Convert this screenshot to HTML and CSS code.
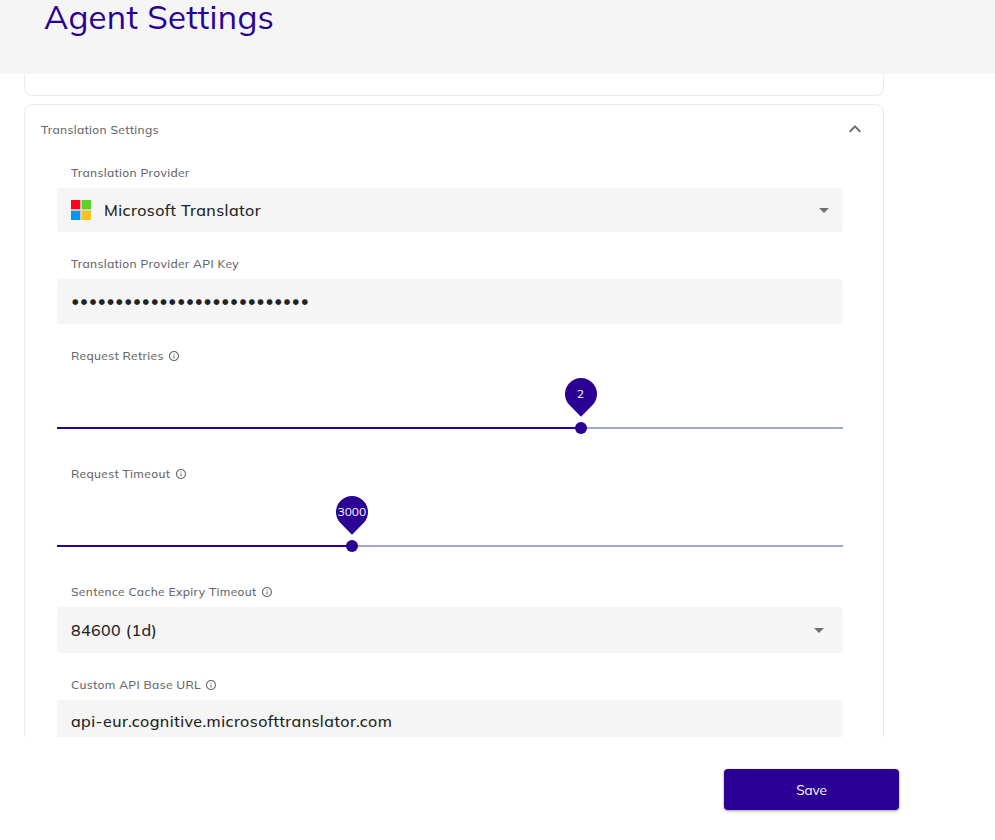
FILE: index.html
```
<!DOCTYPE html>
<html lang="en">
<head>
<meta charset="utf-8">
<title>Agent Settings</title>
<link rel="stylesheet" href="styles.css">
</head>
<body>
<svg class="defs" aria-hidden="true">
  <symbol id="info" viewBox="0 0 24 24"><path d="M11 7h2v2h-2zm0 4h2v6h-2zm1-9C6.48 2 2 6.48 2 12s4.48 10 10 10 10-4.48 10-10S17.52 2 12 2zm0 18c-4.41 0-8-3.59-8-8s3.59-8 8-8 8 3.59 8 8-3.59 8-8 8z"/></symbol>
  <symbol id="arrow" viewBox="0 0 10 5"><path d="M0 0l5 5 5-5z"/></symbol>
</svg>
<header class="page-header"><h1 class="title">Agent Settings</h1></header>
<main class="content">
  <section class="card card-previous"></section>
  <section class="card">
    <div class="card-head">
      <h2 class="label">Translation Settings</h2>
      <svg class="chevron" viewBox="0 0 24 24"><path d="M12 8l-6 6 1.41 1.41L12 10.83l4.59 4.58L18 14z"/></svg>
    </div>
    <div class="group provider">
      <div class="label">Translation Provider</div>
      <div class="field">
        <svg class="logo" viewBox="0 0 20 20"><path class="logo-gap" d="M0 9h20v2H0zM9 0h2v20H9z"/><path class="red" d="M0 0h9.2v9.2H0z"/><path class="green" d="M10.8 0H20v9.2h-9.2z"/><path class="blue" d="M0 10.8h9.2V20H0z"/><path class="yellow" d="M10.8 10.8H20V20h-9.2z"/></svg>
        <span class="value">Microsoft Translator</span>
        <svg class="arrow"><use href="#arrow"/></svg>
      </div>
    </div>
    <div class="group key">
      <div class="label">Translation Provider API Key</div>
      <div class="field"><span class="password">●●●●●●●●●●●●●●●●●●●●●●●●●●●</span></div>
    </div>
    <div class="group slider-group retries">
      <div class="label">Request Retries<svg class="info"><use href="#info"/></svg></div>
      <div class="slider"><div class="fill"></div><div class="thumb"><div class="pin"><span>2</span></div></div></div>
    </div>
    <div class="group slider-group timeout">
      <div class="label">Request Timeout<svg class="info"><use href="#info"/></svg></div>
      <div class="slider"><div class="fill"></div><div class="thumb"><div class="pin"><span>3000</span></div></div></div>
    </div>
    <div class="group cache">
      <div class="label">Sentence Cache Expiry Timeout<svg class="info"><use href="#info"/></svg></div>
      <div class="field"><span class="value">84600 (1d)</span><svg class="arrow"><use href="#arrow"/></svg></div>
    </div>
    <div class="group url">
      <div class="label">Custom API Base URL<svg class="info"><use href="#info"/></svg></div>
      <div class="field"><span class="value">api-eur.cognitive.microsofttranslator.com</span></div>
    </div>
  </section>
</main>
<footer class="actions"><button class="save">Save</button></footer>
</body>
</html>
```
FILE: styles.css
```
* { box-sizing: border-box; }
body { margin: 0; height: 840px; display: flex; flex-direction: column; overflow: hidden; background: #fff; font-family: Mulish, Muli, Lato, sans-serif; color: #222; }
.defs { display: none; }
.page-header { flex: none; height: 74px; padding-left: 44px; background: #f5f5f5; }
.title { margin: 0; font-size: 33px; line-height: 34px; font-weight: 400; letter-spacing: .3px; color: #2b0094; white-space: nowrap; }
.content { flex: none; height: 663px; padding-left: 24px; overflow: hidden; display: flex; flex-direction: column; gap: 8px; }
.card { flex: none; width: 860px; height: 700px; padding: 0 40px 0 32px; border: 1px solid #ebebeb; border-radius: 8px; }
.card-previous { height: 22px; border-top: 0; border-radius: 0 0 8px 8px; }
.card-head { height: 59px; margin: 0 -24px 0 -16px; padding: 16px 0 0; display: flex; justify-content: space-between; align-items: flex-start; }
.label { display: flex; align-items: center; height: 18px; margin: 0; font-size: 12px; line-height: 18px; font-weight: 500; letter-spacing: .33px; color: #67676b; white-space: nowrap; }
.chevron { width: 24px; height: 24px; margin: -4px 0 0 0; fill: #6d6d6d; }
.group { height: 91px; }
.group > .label { padding-left: 14px; margin-bottom: 6px; }
.field { width: 786px; height: 44px; padding: 0 14px; border-radius: 4px; background: #f5f5f5; display: flex; align-items: center; }
.key { height: 92px; }
.key .field { height: 45px; }
.value { font-size: 16px; line-height: 24px; font-weight: 500; letter-spacing: .43px; white-space: nowrap; }
.url .field { height: 42px; }
.logo { width: 20px; height: 20px; margin-right: 13px; }
.logo-gap { fill: #dedbd4; }
.red { fill: #ff001d; }
.green { fill: #5bd324; }
.blue { fill: #0099f2; }
.yellow { fill: #ffc21c; }
.arrow { width: 10px; height: 5px; margin-left: auto; fill: #707070; }
.password { padding-left: 1px; font: 7.5px/18px "DejaVu Sans", sans-serif; letter-spacing: 2.28px; }
.info { width: 12px; height: 12px; margin: 0 0 0 4.4px; fill: #67676b; }
.slider-group { height: 118px; }
.slider { width: 786px; height: 2px; margin-top: 62px; display: flex; align-items: center; background: #a2a6d6; }
.fill { height: 2px; background: #2b0094; }
.retries .fill { width: 524px; }
.timeout .fill { width: 295px; }
.thumb { position: relative; flex: none; width: 12px; height: 12px; margin-left: -6px; border-radius: 50%; background: #2b0094; }
.pin { position: absolute; left: -10px; bottom: 24px; width: 32px; height: 32px; border-radius: 50% 50% 0 50%; transform: rotate(45deg); background: #2b0094; display: flex; align-items: center; justify-content: center; }
.pin span { transform: rotate(-45deg) translateY(-1px); color: #fff; font-size: 12px; letter-spacing: -.1px; }
.cache { height: 93px; }
.cache .field { height: 46px; padding-right: 19px; }
.actions { flex: none; padding: 32px 0 0 724px; }
.save { display: block; width: 175px; height: 41px; padding: 0; border: 0; border-radius: 4px; background: #2b0094; color: #fff; font: 400 13.5px Mulish, Muli, Lato, sans-serif; letter-spacing: -.1px; box-shadow: 0 1px 3px rgba(0,0,0,.4); }
```
